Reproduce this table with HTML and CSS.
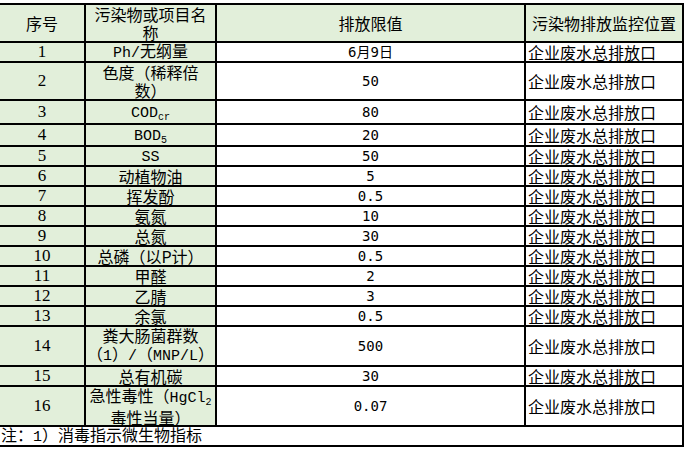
FILE: index.html
```html
<!DOCTYPE html>
<html lang="zh-CN">
<head>
<meta charset="utf-8">
<title>污染物排放限值</title>
<link rel="stylesheet" href="styles.css">
</head>
<body>
<div class="sheet">
  <div class="c hd"><span>序号</span></div>
  <div class="c hd"><span>污染物或项目名<br>称</span></div>
  <div class="c hd"><span>排放限值</span></div>
  <div class="c hd"><span>污染物排放监控位置</span></div>

  <div class="c g num"><span>1</span></div><div class="c g name"><span><i class="lt">Ph/</i>无纲量</span></div><div class="c val"><span>6月9日</span></div><div class="c loc"><span>企业废水总排放口</span></div>
  <div class="c g num"><span>2</span></div><div class="c g name"><span>色度（稀释倍<br>数）</span></div><div class="c val"><span>50</span></div><div class="c loc"><span>企业废水总排放口</span></div>
  <div class="c g num"><span>3</span></div><div class="c g name"><span><i class="lt">COD</i><sub>cr</sub></span></div><div class="c val"><span>80</span></div><div class="c loc"><span>企业废水总排放口</span></div>
  <div class="c g num"><span>4</span></div><div class="c g name"><span><i class="lt">BOD</i><sub>5</sub></span></div><div class="c val"><span>20</span></div><div class="c loc"><span>企业废水总排放口</span></div>
  <div class="c g num"><span>5</span></div><div class="c g name"><span><i class="lt">SS</i></span></div><div class="c val"><span>50</span></div><div class="c loc"><span>企业废水总排放口</span></div>
  <div class="c g num"><span>6</span></div><div class="c g name"><span>动植物油</span></div><div class="c val"><span>5</span></div><div class="c loc"><span>企业废水总排放口</span></div>
  <div class="c g num"><span>7</span></div><div class="c g name"><span>挥发酚</span></div><div class="c val"><span>0.5</span></div><div class="c loc"><span>企业废水总排放口</span></div>
  <div class="c g num"><span>8</span></div><div class="c g name"><span>氨氮</span></div><div class="c val"><span>10</span></div><div class="c loc"><span>企业废水总排放口</span></div>
  <div class="c g num"><span>9</span></div><div class="c g name"><span>总氮</span></div><div class="c val"><span>30</span></div><div class="c loc"><span>企业废水总排放口</span></div>
  <div class="c g num"><span>10</span></div><div class="c g name"><span>总磷（以P计）</span></div><div class="c val"><span>0.5</span></div><div class="c loc"><span>企业废水总排放口</span></div>
  <div class="c g num"><span>11</span></div><div class="c g name"><span>甲醛</span></div><div class="c val"><span>2</span></div><div class="c loc"><span>企业废水总排放口</span></div>
  <div class="c g num"><span>12</span></div><div class="c g name"><span>乙腈</span></div><div class="c val"><span>3</span></div><div class="c loc"><span>企业废水总排放口</span></div>
  <div class="c g num"><span>13</span></div><div class="c g name"><span>余氯</span></div><div class="c val"><span>0.5</span></div><div class="c loc"><span>企业废水总排放口</span></div>
  <div class="c g num"><span>14</span></div><div class="c g name"><span>粪大肠菌群数<br>（<i class="lt">1</i>）<i class="lt">/</i>（<i class="lt">MNP/L</i>）</span></div><div class="c val"><span>500</span></div><div class="c loc"><span>企业废水总排放口</span></div>
  <div class="c g num"><span>15</span></div><div class="c g name"><span>总有机碳</span></div><div class="c val"><span>30</span></div><div class="c loc"><span>企业废水总排放口</span></div>
  <div class="c g num"><span>16</span></div><div class="c g name"><span>急性毒性（<i class="lt">HgCl</i><sub>2</sub><br>毒性当量）</span></div><div class="c val"><span>0.07</span></div><div class="c loc"><span>企业废水总排放口</span></div>

  <div class="c note"><span>注：<i class="lt">1</i>）消毒指示微生物指标</span></div>
</div>
</body>
</html>
```
FILE: styles.css
```css
html, body {
  margin: 0;
  padding: 0;
  background: #ffffff;
}

body {
  font-family: "Noto Sans CJK SC", "DejaVu Sans", sans-serif;
  font-size: 16px;
  color: #000;
}

.sheet {
  display: grid;
  grid-template-columns: 84px 129px 307px 156px;
  grid-template-rows: 36px 18px 36px 22px 20px 18px 18px 18px 18px 18px 18px 18px 18px 18px 38px 18px 38px 18px;
  gap: 2px;
  background: #000;
  padding: 2px 2px 2px 0;
  margin-top: 3px;
  width: max-content;
}

.c {
  background: #ffffff;
  display: flex;
  align-items: center;
  justify-content: center;
  text-align: center;
  overflow: hidden;
  white-space: nowrap;
}

.c > span {
  display: block;
  line-height: 18px;
}

.hd,
.g {
  background: #e2efda;
}

.num {
  font-family: "Liberation Serif", serif;
  font-size: 17px;
}

.lt {
  font-style: normal;
  font-family: "Liberation Mono", monospace;
  font-size: 15px;
}

.name sub {
  font-family: "Liberation Mono", monospace;
  font-size: 10px;
  line-height: 0;
  vertical-align: -3px;
}

.val {
  font-family: "DejaVu Sans Mono", "Noto Sans CJK SC", monospace;
  font-size: 14px;
}

.loc {
  justify-content: flex-start;
  padding-left: 2px;
}

.note {
  grid-column: 1 / -1;
  justify-content: flex-start;
  padding-left: 1px;
}
```
